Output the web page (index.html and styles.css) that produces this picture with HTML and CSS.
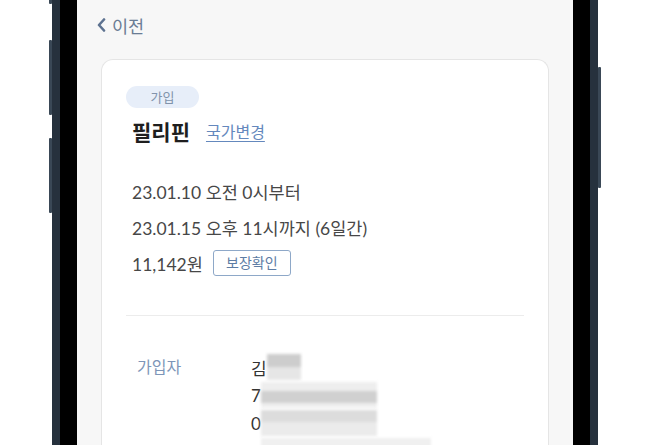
FILE: index.html
```html
<!DOCTYPE html>
<html lang="ko">
<head>
    <meta charset="UTF-8">
    <meta name="viewport" content="width=device-width, initial-scale=1.0">
    <title>가입 정보</title>
    <link rel="stylesheet" href="styles.css">
</head>
<body>
    <div class="phone">
        <span class="btn btn-l1"></span>
        <span class="btn btn-l2"></span>
        <span class="btn btn-l3"></span>
        <span class="btn btn-r1"></span>
        <div class="bezel">
            <div class="screen">
                <div class="topbar">
                    <a href="javascript:;" class="back">
                        <svg width="9" height="14" viewBox="0 0 9 14"><polyline points="7,1.5 2,7 7,12.5" fill="none" stroke="#5d7290" stroke-width="2.6" stroke-linecap="round" stroke-linejoin="round"/></svg>
                        <span>이전</span>
                    </a>
                </div>
                <div class="card">
                    <div class="summary">
                        <span class="badge">가입</span>
                        <div class="title">
                            <strong>필리핀</strong>
                            <a href="javascript:;" class="change">국가변경</a>
                        </div>
                        <ul class="period">
                            <li>23.01.10 오전 0시부터</li>
                            <li>23.01.15 오후 11시까지 (6일간)</li>
                            <li>11,142원 <a href="javascript:;" class="check">보장확인</a></li>
                        </ul>
                    </div>
                    <div class="divider"></div>
                    <div class="member">
                        <div class="label">가입자</div>
                        <ul class="values">
                            <li><span class="ch">김</span><i class="mask m1"></i></li>
                            <li><span class="ch">7</span><i class="mask m2"></i></li>
                            <li><span class="ch">0</span><i class="mask m3"></i></li>
                            <li><i class="mask m4"></i></li>
                        </ul>
                    </div>
                </div>
            </div>
        </div>
    </div>
</body>
</html>
```

FILE: styles.css
```css
*{
    margin: 0;
    padding: 0;
}
body{
    background: #fff;
    font-family: Lato, "Noto Sans CJK KR", sans-serif;
    height: 445px;
    overflow: hidden;
}
ul{
    list-style: none;
}
a{
    text-decoration: none;
}
.phone{
    position: relative;
    width: 530px;
    height: 445px;
    margin-left: 52px;
    padding: 0 8px;
    background: #26313d;
}
.btn{
    position: absolute;
    width: 3px;
    background: #3a4856;
    border-radius: 1px;
}
.btn-l1{ left: -3px; top: -20px; height: 24px; }
.btn-l2{ left: -3px; top: 40px; height: 75px; }
.btn-l3{ left: -3px; top: 138px; height: 75px; }
.btn-r1{ right: -3px; top: 67px; height: 121px; }
.bezel{
    height: 100%;
    padding: 0 17px;
    background: #000;
}
.screen{
    height: 100%;
    background: #f7f7f7;
    display: flex;
    flex-direction: column;
    overflow: hidden;
}
.topbar{
    flex-shrink: 0;
    height: 59px;
    padding: 14px 0 0 20px;
    box-sizing: border-box;
}
.back{
    display: inline-flex;
    align-items: center;
    gap: 6px;
    height: 22px;
    color: #6a7c94;
    font-size: 17.5px;
}
.card{
    flex: 1;
    margin: 0 24px;
    padding: 26px 24px 0;
    background: #fff;
    border: 1px solid #e5e5e5;
    border-bottom: none;
    border-radius: 12px 12px 0 0;
}
.summary{
    padding-left: 6px;
}
.badge{
    display: inline-block;
    margin-left: -6px;
    width: 73px;
    height: 22px;
    line-height: 22px;
    text-align: center;
    border-radius: 11px;
    background: #e7eef9;
    color: #8193ab;
    font-size: 13px;
}
.title{
    margin-top: 8px;
    display: flex;
    align-items: center;
    gap: 16px;
    height: 30px;
}
.title strong{
    font-size: 21px;
    font-weight: 700;
    color: #1e1e1e;
}
.change{
    font-size: 16px;
    color: #6488bd;
    text-decoration: underline;
    text-underline-offset: 3px;
}
.period{
    margin-top: 27px;
}
.period li{
    display: flex;
    align-items: center;
    gap: 10px;
    height: 36px;
    font-size: 17.5px;
    color: #474747;
}
.check{
    display: inline-block;
    width: 78px;
    height: 26px;
    box-sizing: border-box;
    border: 1px solid #8ea8c8;
    border-radius: 3px;
    text-align: center;
    line-height: 24px;
    font-size: 14px;
    color: #5d7ca4;
}
.divider{
    margin-top: 34px;
    height: 1px;
    background: #ececec;
}
.member{
    display: grid;
    grid-template-columns: 114px 1fr;
    padding: 37px 0 0 11px;
}
.label{
    height: 28px;
    line-height: 28px;
    font-size: 16px;
    color: #7d95b8;
}
.values li{
    display: flex;
    align-items: center;
    height: 28px;
    font-size: 17px;
    color: #333;
}
.mask{
    display: block;
    height: 26px;
    filter: blur(1.5px);
}
.m1{
    width: 34px;
    background: linear-gradient(#cdcdcd 0 50%, #e6e6e6 50%);
}
.m2{
    width: 116px;
    background: linear-gradient(#eeeeee 0 35%, #d0d0d0 35% 80%, #efefef 80%);
}
.m3{
    width: 116px;
    background: linear-gradient(#dcdcdc 0 45%, #ebebeb 45%);
}
.m4{
    margin-left: 10px;
    width: 170px;
    background: #f0f0f0;
}
```
